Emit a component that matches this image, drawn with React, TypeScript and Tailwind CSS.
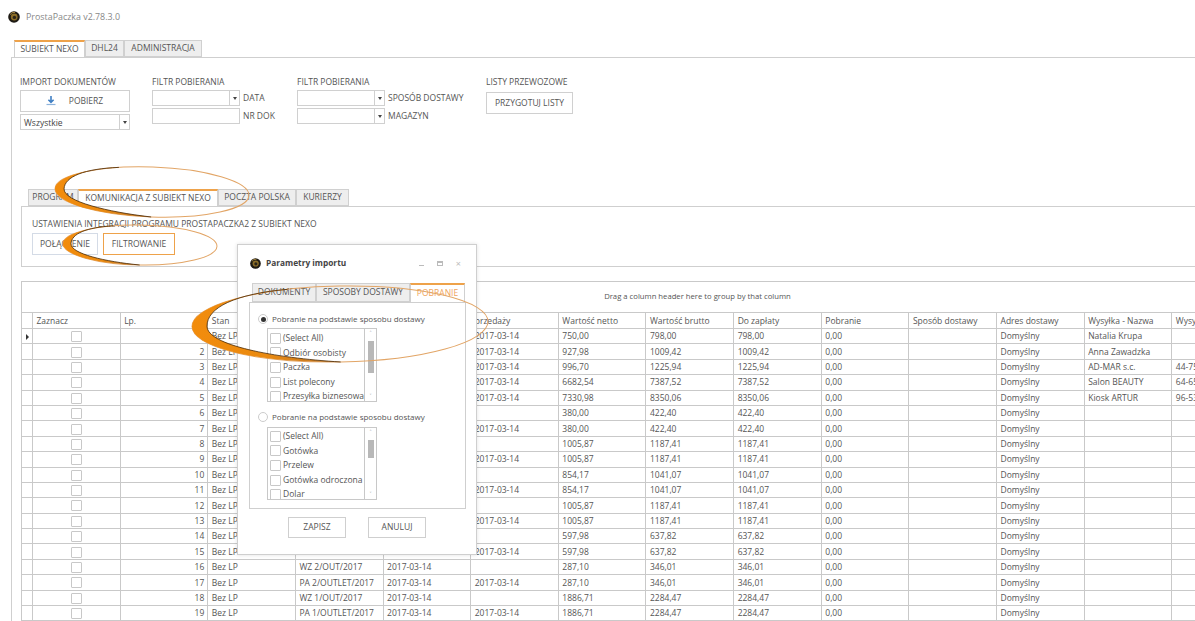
import React from "react";

const Logo = ({ size = 12 }: { size?: number }) => (
  <svg width={size} height={size} viewBox="0 0 12 12" className="shrink-0">
    <circle cx="6" cy="6" r="5.8" fill="#1d1a14" />
    <circle cx="6.2" cy="6" r="3.4" fill="#8a6c26" />
    <circle cx="6.4" cy="6.4" r="1.7" fill="#2a2418" />
    <path d="M2 3.6A5 5 0 0 1 7 1.4" stroke="#c9a24a" strokeWidth="0.8" fill="none" />
  </svg>
);

const Arrow = () => <span className="w-0 h-0 border-x-[2px] border-x-transparent border-t-[3px] border-t-[#444]" />;

const Combo = ({ w, text }: { w: string; text?: string }) => (
  <div className={`flex h-[16px] ${w} border border-[#d0d0d0] bg-white`}>
    <span className="flex-1 pl-[3px] leading-[15px] text-[#444]">{text}</span>
    <span className="w-[10px] border-l border-[#d0d0d0] flex items-center justify-center">
      <Arrow />
    </span>
  </div>
);

const Tab = ({ label, w, active, orange }: { label: string; w: string; active?: boolean; orange?: boolean }) => (
  <div
    className={`${w} flex items-center justify-center whitespace-nowrap h-full border-x border-[#d0d0d0] ${
      active ? "bg-white border-t-2 border-t-[#eea24a] -mb-px relative z-[1]" : "bg-[#eeeeee] border-t border-b"
    } ${orange ? "text-[#f0a45c]" : ""}`}
  >
    {label}
  </div>
);

const Swoosh = ({
  x, y, w, h, t, rot, id,
}: { x: string; y: string; w: string; h: string; t: number; rot: number; id: string }) => {
  const W = parseInt(w.replace(/\D/g, ""));
  const H = parseInt(h.replace(/\D/g, ""));
  const cx = W / 2, cy = H / 2, rx = W / 2 - 3, ry = H / 2 - 4;
  const Tx = cx - rx * 0.35, Ty = cy - ry * 0.937;
  const Bx = cx, By = cy + ry;
  const Lx = cx - rx + t;
  const inner = `M${Bx} ${By} C${cx - rx * 0.45} ${cy + ry * 0.86} ${Lx} ${cy + ry * 0.5} ${Lx} ${cy} C${Lx} ${cy - ry * 0.5} ${cx - rx * 0.7} ${cy - ry * 0.84} ${Tx} ${Ty}`;
  return (
    <svg width={W} height={H} className={`absolute ${x} ${y} ${w} ${h} z-20 pointer-events-none`}>
      <defs>
        <linearGradient id={id} x1="0" x2="1" y1="0" y2="0">
          <stop offset="0" stopColor="#f28c0c" />
          <stop offset="0.5" stopColor="#ea8a10" />
          <stop offset="1" stopColor="#b9742a" />
        </linearGradient>
      </defs>
      <g transform={`rotate(${rot} ${cx} ${cy})`}>
        <ellipse cx={cx} cy={cy} rx={rx} ry={ry} fill="none" stroke="#e2a566" strokeWidth="1" />
        <path
          d={`M${Tx} ${Ty} A${rx} ${ry} 0 0 0 ${Bx} ${By} ${inner.replace(/^M[^C]*/, "")} Z`}
          fill={`url(#${id})`}
        />
        <path d={inner} fill="none" stroke="#4a2a08" strokeWidth="0.8" />
      </g>
    </svg>
  );
};

const Check = ({ s = 11 }: { s?: number }) => (
  <span style={{ width: s, height: s }} className="inline-block border border-[#c8c8c8] bg-white rounded-[1px] shrink-0" />
);

const ListBox = ({ h, pt, items, thumb, thumbH }: { h: string; pt: string; items: string[]; thumb: string; thumbH: string }) => (
  <div className={`ml-[17px] w-[110px] ${h} border border-[#c8c8c8] flex overflow-hidden bg-white`}>
    <div className={`flex-1 flex flex-col pl-[2px] ${pt} overflow-hidden`}>
      {items.map((i) => (
        <div key={i} className="flex items-center gap-[2px] h-[14.6px] shrink-0 whitespace-nowrap">
          <Check />
          {i}
        </div>
      ))}
    </div>
    <div className="w-[12px] border-l border-[#c8c8c8] flex flex-col items-center text-[#888]">
      <span className="h-[9px] text-[6px] leading-[9px]">˄</span>
      <span className={`w-[6px] ${thumbH} ${thumb} bg-[#b8b8b8]`} />
      <span className="flex-1" />
      <span className="h-[9px] text-[6px] leading-[9px]">˅</span>
    </div>
  </div>
);

const headers = [
  "", "Zaznacz", "Lp.", "Stan", "", "", "przedaży", "Wartość netto", "Wartość brutto", "Do zapłaty", "Pobranie",
  "Sposób dostawy", "Adres dostawy", "Wysyłka - Nazwa", "Wysyłka - Kod",
];

const d = "2017-03-14";
const rows: [string, string, string, string, string, string, string][] = [
  ["", "", d, "750,00", "798,00", "Natalia Krupa", ""],
  ["", "", d, "927,98", "1009,42", "Anna Zawadzka", ""],
  ["", "", d, "996,70", "1225,94", "AD-MAR s.c.", "44-750"],
  ["", "", d, "6682,54", "7387,52", "Salon BEAUTY", "64-650"],
  ["", "", d, "7330,98", "8350,06", "Kiosk ARTUR", "96-530"],
  ["", "", "", "380,00", "422,40", "", ""],
  ["", "", d, "380,00", "422,40", "", ""],
  ["", "", "", "1005,87", "1187,41", "", ""],
  ["", "", d, "1005,87", "1187,41", "", ""],
  ["", "", "", "854,17", "1041,07", "", ""],
  ["", "", d, "854,17", "1041,07", "", ""],
  ["", "", "", "1005,87", "1187,41", "", ""],
  ["", "", d, "1005,87", "1187,41", "", ""],
  ["", "", "", "597,98", "637,82", "", ""],
  ["", "", d, "597,98", "637,82", "", ""],
  ["WZ 2/OUT/2017", d, "", "287,10", "346,01", "", ""],
  ["PA 2/OUTLET/2017", d, d, "287,10", "346,01", "", ""],
  ["WZ 1/OUT/2017", d, "", "1886,71", "2284,47", "", ""],
  ["PA 1/OUTLET/2017", d, d, "1886,71", "2284,47", "", ""],
];

const Cell = ({ children, right, center }: { children?: React.ReactNode; right?: boolean; center?: boolean }) => (
  <div
    className={`border-r border-[#c9c9c9] overflow-hidden whitespace-nowrap flex items-center pt-[1px] ${
      right ? "justify-end pr-[3px]" : center ? "justify-center" : "pl-[3.5px]"
    }`}
  >
    {children}
  </div>
);

const gridCols = "grid grid-cols-[11px_repeat(14,87.65px)]";

export default function App() {
  return (
    <div
      className="relative w-[1195px] h-[621px] overflow-hidden bg-white text-[8.5px] text-[#555]"
      style={{ fontFamily: '"Open Sans", "Noto Sans", sans-serif' }}
    >
      {/* title */}
      <div className="h-[40px] flex items-start pl-[8px] pt-[11px] gap-[6px]">
        <Logo />
        <span className="text-[#888] text-[8.9px] leading-[12px]">ProstaPaczka v2.78.3.0</span>
      </div>

      {/* main tabs */}
      <div className="flex h-[17px] pl-[14px]">
        <Tab label="SUBIEKT NEXO" w="w-[71px]" active />
        <Tab label="DHL24" w="w-[39px]" />
        <Tab label="ADMINISTRACJA" w="w-[78px]" />
      </div>

      {/* main panel */}
      <div className="ml-[11px] h-[564px] border-l border-t border-[#cfcfcf]">
        {/* ribbon */}
        <div className="flex h-[131px] pt-[18px] pl-[8px]">
          <div className="w-[110px] flex flex-col">
            <div className="h-[14px] leading-[12px] whitespace-nowrap">IMPORT DOKUMENTÓW</div>
            <div className="h-[22px] border border-[#d0d0d0] flex items-center justify-center gap-[12px] pr-[2px]">
              <svg width="12" height="12" viewBox="0 0 12 12">
                <path d="M6 1v6M3.4 4.8 6 7.4l2.6-2.6" stroke="#3f7fc4" strokeWidth="1.6" fill="none" />
                <path d="M1.5 9.5h9" stroke="#8db3dc" strokeWidth="1.2" />
              </svg>
              <span>POBIERZ</span>
            </div>
            <div className="mt-[2px]">
              <Combo w="w-[110px]" text="Wszystkie" />
            </div>
          </div>

          <div className="ml-[22px] w-[145px]">
            <div className="h-[14px] leading-[12px]">FILTR POBIERANIA</div>
            <div className="flex items-center gap-[3px] h-[16px]">
              <Combo w="w-[88px]" />
              <span>DATA</span>
            </div>
            <div className="flex items-center gap-[3px] h-[16px] mt-[2px]">
              <div className="w-[88px] h-[16px] border border-[#d0d0d0]" />
              <span>NR DOK</span>
            </div>
          </div>

          <div className="w-[189px]">
            <div className="h-[14px] leading-[12px]">FILTR POBIERANIA</div>
            <div className="flex items-center gap-[3px] h-[16px]">
              <Combo w="w-[88px]" />
              <span>SPOSÓB DOSTAWY</span>
            </div>
            <div className="flex items-center gap-[3px] h-[16px] mt-[2px]">
              <Combo w="w-[88px]" />
              <span>MAGAZYN</span>
            </div>
          </div>

          <div>
            <div className="h-[14px] leading-[12px]">LISTY PRZEWOZOWE</div>
            <div className="mt-[2px] w-[87px] h-[22px] border border-[#d0d0d0] flex items-center justify-center">PRZYGOTUJ LISTY</div>
          </div>
        </div>

        {/* sub tabs */}
        <div className="flex h-[17px] ml-[16px]">
          <Tab label="PROGRAM" w="w-[50px]" />
          <Tab label="KOMUNIKACJA Z SUBIEKT NEXO" w="w-[140px]" active />
          <Tab label="POCZTA POLSKA" w="w-[78px]" />
          <Tab label="KURIERZY" w="w-[53px]" />
        </div>
        <div className="ml-[9px] h-[61px] border-l border-y border-[#cfcfcf] pl-[10px] pt-[11px]">
          <div className="h-[15px] leading-[12px] whitespace-nowrap">USTAWIENIA INTEGRACJI PROGRAMU PROSTAPACZKA2 Z SUBIEKT NEXO</div>
          <div className="flex gap-[5px]">
            <div className="w-[66px] h-[22px] border border-[#d4dbe6] flex items-center justify-center">POŁĄCZENIE</div>
            <div className="w-[72px] h-[22px] border border-[#eea24a] flex items-center justify-center">FILTROWANIE</div>
          </div>
        </div>

        {/* grid */}
        <div className="ml-[9px] mt-[14px] w-[1352px] border-l border-t border-[#c9c9c9]">
          <div className="h-[31px] flex items-center justify-center border-b border-[#c9c9c9] text-[7.7px]">
            Drag a column header here to group by that column
          </div>
          <div className={`${gridCols} h-[16px] border-b border-[#c9c9c9]`}>
            {headers.map((h, i) => (
              <Cell key={i}>{h}</Cell>
            ))}
          </div>
          {rows.map((r, i) => (
            <div key={i} className={`${gridCols} h-[15.4px] border-b border-[#c9c9c9]`}>
              <Cell center>
                {i === 0 && <span className="w-0 h-0 border-y-[3px] border-y-transparent border-l-[3px] border-l-[#333]" />}
              </Cell>
              <Cell center><Check /></Cell>
              <Cell right>{i + 1}</Cell>
              <Cell>Bez LP</Cell>
              <Cell>{r[0]}</Cell>
              <Cell>{r[1]}</Cell>
              <Cell>{r[2]}</Cell>
              <Cell>{r[3]}</Cell>
              <Cell>{r[4]}</Cell>
              <Cell>{r[4]}</Cell>
              <Cell>0,00</Cell>
              <Cell />
              <Cell>Domyślny</Cell>
              <Cell>{r[5]}</Cell>
              <Cell>{r[6]}</Cell>
            </div>
          ))}
        </div>
      </div>

      {/* dialog */}
      <div className="absolute left-[237px] top-[244px] w-[240px] h-[311px] bg-white border border-[#cfcfcf] z-10 shadow-[0_0_4px_rgba(0,0,0,0.12)] flex flex-col">
        <div className="h-[38px] flex items-center pl-[12px] pr-[15px] pb-[2px] gap-[5px] shrink-0">
          <Logo size={11} />
          <span className="font-bold text-[8.3px] text-[#444] flex-1">Parametry importu</span>
          <span className="w-[5px] h-px bg-[#bbb] mt-[4px]" />
          <span className="w-[6px] h-[5px] border border-[#bbb] border-t-2 ml-[8px]" />
          <span className="text-[9px] leading-none text-[#bbb] ml-[8px]">×</span>
        </div>
        <div className="flex h-[19px] ml-[14px] shrink-0">
          <Tab label="DOKUMENTY" w="w-[64px]" />
          <Tab label="SPOSOBY DOSTAWY" w="w-[94px]" />
          <Tab label="POBRANIE" w="w-[55px]" active orange />
        </div>
        <div className="ml-[11px] w-[217px] h-[207px] border border-[#cfcfcf] pt-[10px] shrink-0">
          <div className="flex items-center pl-[8px] gap-[4px] h-[12px] whitespace-nowrap text-[8px]">
            <span className="w-[10px] h-[10px] rounded-full border border-[#ccc] flex items-center justify-center">
              <span className="w-[5px] h-[5px] rounded-full bg-[#333]" />
            </span>
            Pobranie na podstawie sposobu dostawy
          </div>
          <div className="mt-[3px]">
            <ListBox h="h-[74px]" pt="pt-[2px]" thumb="mt-[3px]" thumbH="h-[32px]" items={["(Select All)", "Odbiór osobisty", "Paczka", "List polecony", "Przesyłka biznesowa"]} />
          </div>
          <div className="flex items-center pl-[8px] gap-[4px] h-[12px] mt-[9px] whitespace-nowrap text-[8px]">
            <span className="w-[10px] h-[10px] rounded-full border border-[#ccc]" />
            Pobranie na podstawie sposobu dostawy
          </div>
          <div className="mt-[4px]">
            <ListBox h="h-[73px]" pt="pt-[1px]" thumb="mt-[3px]" thumbH="h-[18px]" items={["(Select All)", "Gotówka", "Przelew", "Gotówka odroczona", "Dolar"]} />
          </div>
        </div>
        <div className="flex justify-center gap-[22px] mt-[8px]">
          <div className="w-[58px] h-[21px] border border-[#cfcfcf] flex items-center justify-center">ZAPISZ</div>
          <div className="w-[58px] h-[21px] border border-[#cfcfcf] flex items-center justify-center">ANULUJ</div>
        </div>
      </div>

      <Swoosh id="s1" x="left-[52px]" y="top-[163px]" w="w-[200px]" h="h-[58px]" t={9} rot={2} />
      <Swoosh id="s2" x="left-[60px]" y="top-[221px]" w="w-[160px]" h="h-[48px]" t={8} rot={1} />
      <Swoosh id="s3" x="left-[189px]" y="top-[282px]" w="w-[302px]" h="h-[84px]" t={15} rot={-1} />
    </div>
  );
}
